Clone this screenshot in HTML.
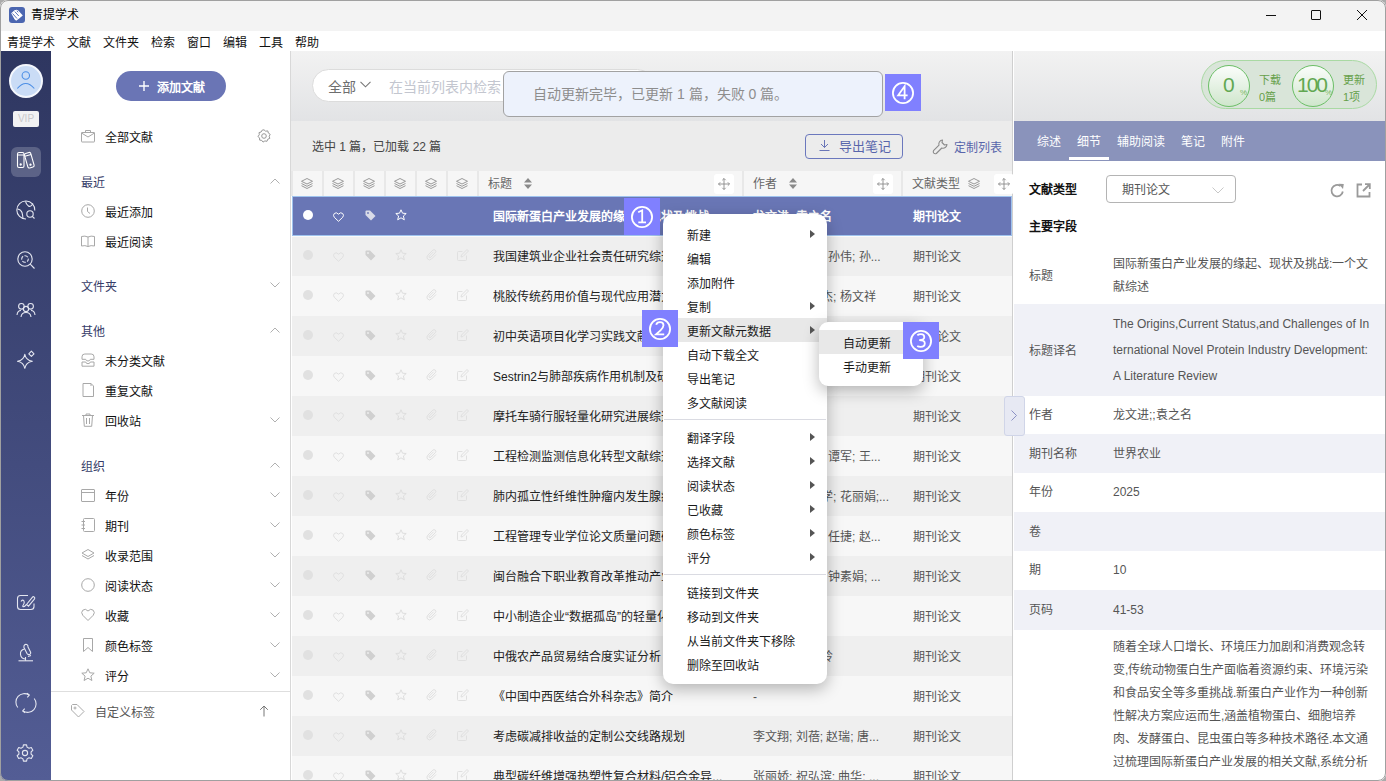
<!DOCTYPE html><html lang="zh-CN"><head><meta charset="utf-8"><style>
*{box-sizing:border-box;margin:0;padding:0}
html,body{width:1386px;height:781px;overflow:hidden;background:#ababab}
body{font-family:"Liberation Sans",sans-serif;font-size:12px;color:#222;position:relative}
.a{position:absolute}
.t{position:absolute;white-space:nowrap;line-height:16px;margin-top:1.5px}
svg{position:absolute;overflow:visible}
#win{position:absolute;left:0;top:0;width:1386px;height:781px;border-radius:8px;overflow:hidden;background:#fff}
#frame{position:absolute;left:0;top:0;width:1386px;height:781px;border-radius:8px;border:1px solid #a0a0a0;pointer-events:none}
</style></head><body><div id="win">
<div class="a" style="left:0;top:0;width:1386px;height:31px;background:#f3f3f3"></div>
<div class="a" style="left:9px;top:7px;width:16px;height:16px;border-radius:3px;background:#4b66b0"></div>
<svg style="left:9px;top:7px" width="16" height="16" viewBox="0 0 16 16"><path d="M2.2 6.3 L5.5 3.3 L7.8 2.8 L9.5 3.8 L13.8 8.6 L10.5 11.2 L7.2 13.8 L5.5 12.2 Z" fill="#fff"/><path d="M3.5 6.5 L8 11.5 M5.8 4.6 L9.8 9 M7.8 3.8 L9.2 5.3" stroke="#4b66b0" stroke-width="0.9"/></svg>
<div class="t" style="left:31px;top:5px;color:#000">青提学术</div>
<div class="a" style="left:1266px;top:15px;width:10px;height:1px;background:#111"></div>
<div class="a" style="left:1311px;top:10px;width:10px;height:10px;border:1px solid #111;border-radius:1px"></div>
<svg style="left:1357px;top:10px" width="10" height="10" viewBox="0 0 10 10"><path d="M0 0L10 10M10 0L0 10" stroke="#111" stroke-width="1"/></svg>
<div class="a" style="left:0;top:31px;width:1386px;height:20px;background:#fff"></div>
<div class="t" style="left:7px;top:33px;color:#111">青提学术</div>
<div class="t" style="left:67px;top:33px;color:#111">文献</div>
<div class="t" style="left:103px;top:33px;color:#111">文件夹</div>
<div class="t" style="left:151px;top:33px;color:#111">检索</div>
<div class="t" style="left:187px;top:33px;color:#111">窗口</div>
<div class="t" style="left:223px;top:33px;color:#111">编辑</div>
<div class="t" style="left:259px;top:33px;color:#111">工具</div>
<div class="t" style="left:295px;top:33px;color:#111">帮助</div>
<div class="a" style="left:0;top:51px;width:51px;height:730px;background:linear-gradient(#2e3660,#535d95)"></div>
<div class="a" style="left:9px;top:64px;width:34px;height:34px;border-radius:50%;background:#cadcf6;border:2px solid #f4f7fd"></div>
<svg style="left:9px;top:64px" width="34" height="34" viewBox="0 0 34 34"><circle cx="16.8" cy="11.5" r="3.7" fill="none" stroke="#4d8fe6" stroke-width="1.1"/><path d="M8.3 24.5 Q16.8 14.5 25.3 24.5" fill="none" stroke="#4d8fe6" stroke-width="1.1"/></svg>
<div class="a" style="left:13px;top:111px;width:26px;height:16px;border-radius:2px;background:#f1f1f3;color:#c9c9cc;font-size:10px;line-height:16px;text-align:center">VIP</div>
<div class="a" style="left:11px;top:147px;width:30px;height:30px;border-radius:6px;background:rgba(255,255,255,0.2)"></div>
<svg style="left:16px;top:151px" width="20" height="18" viewBox="0 0 20 18" fill="none" stroke="#fff" stroke-width="1.1"><rect x="1.5" y="1.5" width="6.5" height="15" rx="1.5"/><path d="M1.5 4h6.5"/><circle cx="4.7" cy="13.5" r="0.6" fill="#fff"/><g transform="rotate(-16 13 9)"><rect x="10" y="1.8" width="6.5" height="15" rx="1.5"/><path d="M10 4.3h6.5"/><circle cx="13.2" cy="13.8" r="0.6" fill="#fff"/></g></svg>
<svg style="left:16px;top:200px" width="20" height="20" viewBox="0 0 20 20" fill="none" stroke="#e4e6f0" stroke-width="1.1"><path d="M18.8 10.5 A9 9 0 1 0 10 19"/><path d="M9.5 1.3 Q10 4 12.5 6 Q14.5 7.5 17 3.5"/><path d="M1.5 9 Q5 9.5 6 12.5 Q6.8 15.5 7 18.7"/><circle cx="14" cy="14" r="3.2"/><path d="M16.3 16.3 L18.5 18.5"/></svg>
<svg style="left:16px;top:250px" width="20" height="20" viewBox="0 0 20 20" fill="none" stroke="#e4e6f0" stroke-width="1.1"><circle cx="9" cy="9" r="7.2"/><path d="M14.2 14.2 L18.5 18.5"/><circle cx="9" cy="9" r="3.3" stroke-dasharray="3.8 1.4" stroke-dashoffset="1"/></svg>
<svg style="left:16px;top:301px" width="20" height="18" viewBox="0 0 20 18" fill="none" stroke="#e4e6f0" stroke-width="1.1"><circle cx="5.4" cy="5.3" r="2.8"/><circle cx="14.6" cy="5.3" r="2.8"/><circle cx="10" cy="8" r="2.6"/><path d="M1 14 Q1.5 9.5 5 9.5 M19 14 Q18.5 9.5 15 9.5 M5 16 Q5.5 11.5 10 11.5 Q14.5 11.5 15 16"/></svg>
<svg style="left:15px;top:350px" width="20" height="20" viewBox="0 0 20 20" fill="none" stroke="#e4e6f0" stroke-width="1.1" stroke-linejoin="round"><path d="M9.8 4.3 Q10.8 10 17.3 11.3 Q10.8 12.6 9.8 18.3 Q8.8 12.6 2.5 11.3 Q8.8 10 9.8 4.3Z"/><path d="M16.4 1.2 L19 3.8 L16.4 6.4 L13.8 3.8 Z"/></svg>
<svg style="left:16px;top:594px" width="20" height="18" viewBox="0 0 20 18" fill="none" stroke="#e4e6f0" stroke-width="1.1"><path d="M12 1.5 H4.5 Q1.5 1.5 1.5 4.5 V12.5 Q1.5 15.5 4.5 15.5 H15 Q18 15.5 18 12.5 V9.5"/><path d="M10.5 10.5 L16.3 3.3 Q17.2 2.2 18.3 3.1 Q19.3 4.1 18.4 5.1 L12.5 12.2 Z"/><path d="M5 7.5 Q6.5 5 8 7 Q9 9 7 11.5 Q6 13 8.5 12.5 L10.5 10.5"/></svg>
<svg style="left:17px;top:643px" width="18" height="19" viewBox="0 0 18 19" fill="none" stroke="#e4e6f0" stroke-width="1.1" stroke-linejoin="round"><path d="M1.5 17.8 H16"/><path d="M7 2.8 Q7.8 0.8 9.8 1.5 Q11.3 2.3 11 4 L13.5 9 Q14.2 11 12.5 11.5 Q10.8 12 10 10.5 L7.5 5.5 Q6.5 4.5 7 2.8Z"/><path d="M7.5 6 Q3 7 3.5 11.5 Q4 15.5 8 16 M8.5 14 V17.8 M11 13.5 L14 12.5"/></svg>
<svg style="left:16px;top:693px" width="20" height="20" viewBox="0 0 20 20" fill="none" stroke="#e4e6f0" stroke-width="1.1"><path d="M1.8 14.5 A8.5 8.5 0 0 1 13 2"/><path d="M18.2 5.5 A8.5 8.5 0 0 1 7 18"/><path d="M11 0.3 L13.3 2.1 L11.3 4.3 M9 19.7 L6.7 17.9 L8.7 15.7"/></svg>
<svg style="left:16px;top:744px" width="18" height="18" viewBox="0 0 18 18" fill="none" stroke="#e4e6f0" stroke-width="1.1" stroke-linejoin="round"><path d="M7.44 0.85 L10.56 0.85 L11.04 3.14 L13.05 4.31 L15.28 3.58 L16.84 6.27 L15.09 7.84 L15.09 10.16 L16.84 11.73 L15.28 14.42 L13.05 13.69 L11.04 14.86 L10.56 17.15 L7.44 17.15 L6.96 14.86 L4.95 13.69 L2.72 14.42 L1.16 11.73 L2.91 10.16 L2.91 7.84 L1.16 6.27 L2.72 3.58 L4.95 4.31 L6.96 3.14Z"/><circle cx="9" cy="9" r="2.6"/></svg>
<div class="a" style="left:51px;top:51px;width:239px;height:730px;background:#fff"></div>
<div class="a" style="left:290px;top:51px;width:1px;height:730px;background:#d8d8d8"></div>
<div class="a" style="left:116px;top:71px;width:110px;height:30px;border-radius:15px;background:#6a75b5"></div>
<svg style="left:138px;top:80px" width="12" height="12" viewBox="0 0 12 12"><path d="M6 1V11M1 6H11" stroke="#fff" stroke-width="1.4"/></svg>
<div class="t" style="left:157px;top:78px;color:#fff;font-weight:bold">添加文献</div>
<svg style="left:81px;top:129px" width="14" height="14" viewBox="0 0 14 14" fill="none" stroke="#a8a8a8" stroke-width="1"><rect x="0.5" y="3.5" width="13" height="9.5" rx="0.5"/><path d="M4.5 3.5V1.5h5v2M0.5 4 L7 8 L13.5 4"/></svg>
<div class="t" style="left:105px;top:128px;color:#111">全部文献</div>
<svg style="left:257px;top:129px" width="14" height="14" viewBox="0 0 14 14" fill="none" stroke="#999" stroke-width="1"><path d="M7 0.8 L8.6 2.2 L10.8 1.9 L11.3 4 L13.2 5.3 L12.2 7.3 L12.8 9.4 L10.8 10.2 L10 12.3 L7.9 11.9 L6 13.1 L4.8 11.4 L2.6 11.1 L2.6 8.9 L0.9 7.5 L2.3 5.8 L2 3.6 L4.1 3 L5.2 1.1 Z" stroke-linejoin="round"/><circle cx="7" cy="7" r="2.3"/></svg>
<div class="t" style="left:81px;top:173px;color:#363c68">最近</div>
<svg style="left:270px;top:178px" width="10" height="6" viewBox="0 0 10 6"><path d="M0.5 5.5 L5 1 L9.5 5.5" fill="none" stroke="#b0b0b0" stroke-width="1"/></svg>
<svg style="left:81px;top:204px" width="14" height="14" viewBox="0 0 14 14" fill="none" stroke="#a8a8a8" stroke-width="1"><circle cx="7" cy="7" r="6.3"/><path d="M6.5 3.5V7.5L9 9.5"/></svg>
<div class="t" style="left:105px;top:203px;color:#111">最近添加</div>
<svg style="left:81px;top:234px" width="14" height="14" viewBox="0 0 14 14" fill="none" stroke="#a8a8a8" stroke-width="1"><path d="M0.5 2.5 Q4 1.5 7 3 Q10 1.5 13.5 2.5 V12 Q10 11 7 12.5 Q4 11 0.5 12 Z M7 3V12.5"/></svg>
<div class="t" style="left:105px;top:233px;color:#111">最近阅读</div>
<div class="t" style="left:81px;top:277px;color:#363c68">文件夹</div>
<svg style="left:270px;top:282px" width="10" height="6" viewBox="0 0 10 6"><path d="M0.5 0.5 L5 5 L9.5 0.5" fill="none" stroke="#b0b0b0" stroke-width="1"/></svg>
<div class="t" style="left:81px;top:322px;color:#363c68">其他</div>
<svg style="left:270px;top:327px" width="10" height="6" viewBox="0 0 10 6"><path d="M0.5 5.5 L5 1 L9.5 5.5" fill="none" stroke="#b0b0b0" stroke-width="1"/></svg>
<svg style="left:81px;top:353px" width="14" height="14" viewBox="0 0 14 14" fill="none" stroke="#a8a8a8" stroke-width="1"><path d="M1 6.3 V3.8 Q1 1 3.8 1 H10.2 Q13 1 13 3.8 V6.3 H9.3 Q9 8 7 8 Q5 8 4.7 6.3 Z"/><path d="M1 9 H4.7 Q5 10.7 7 10.7 Q9 10.7 9.3 9 H13 V13.2 H1 Z"/></svg>
<div class="t" style="left:105px;top:352px;color:#111">未分类文献</div>
<svg style="left:81px;top:383px" width="14" height="14" viewBox="0 0 14 14" fill="none" stroke="#a8a8a8" stroke-width="1"><path d="M2 0.5 H10 L12.5 3 V13.5 H2 Z M10 0.5V3"/></svg>
<div class="t" style="left:105px;top:382px;color:#111">重复文献</div>
<svg style="left:81px;top:413px" width="14" height="14" viewBox="0 0 14 14" fill="none" stroke="#a8a8a8" stroke-width="1"><path d="M1 2.5H13M5 2.5V1H9V2.5M2.5 2.5 L3.3 13.3 H10.7 L11.5 2.5M5.5 5V11M8.5 5V11"/></svg>
<div class="t" style="left:105px;top:412px;color:#111">回收站</div>
<svg style="left:270px;top:417px" width="10" height="6" viewBox="0 0 10 6"><path d="M0.5 0.5 L5 5 L9.5 0.5" fill="none" stroke="#b0b0b0" stroke-width="1"/></svg>
<div class="t" style="left:81px;top:457px;color:#363c68">组织</div>
<svg style="left:270px;top:462px" width="10" height="6" viewBox="0 0 10 6"><path d="M0.5 5.5 L5 1 L9.5 5.5" fill="none" stroke="#b0b0b0" stroke-width="1"/></svg>
<svg style="left:81px;top:488px" width="14" height="14" viewBox="0 0 14 14" fill="none" stroke="#a8a8a8" stroke-width="1"><rect x="0.5" y="1.5" width="13" height="12" rx="0.5"/><path d="M0.5 4.5H13.5"/></svg>
<div class="t" style="left:105px;top:487px;color:#111">年份</div>
<svg style="left:270px;top:492px" width="10" height="6" viewBox="0 0 10 6"><path d="M0.5 0.5 L5 5 L9.5 0.5" fill="none" stroke="#b0b0b0" stroke-width="1"/></svg>
<svg style="left:81px;top:518px" width="14" height="14" viewBox="0 0 14 14" fill="none" stroke="#a8a8a8" stroke-width="1"><rect x="2.5" y="0.5" width="11" height="13" rx="1"/><path d="M0.5 3.5H4M0.5 7H4M0.5 10.5H4"/></svg>
<div class="t" style="left:105px;top:517px;color:#111">期刊</div>
<svg style="left:270px;top:522px" width="10" height="6" viewBox="0 0 10 6"><path d="M0.5 0.5 L5 5 L9.5 0.5" fill="none" stroke="#b0b0b0" stroke-width="1"/></svg>
<svg style="left:81px;top:548px" width="14" height="14" viewBox="0 0 14 14" fill="none" stroke="#a8a8a8" stroke-width="1"><path d="M7 1.5 L13 5 L7 8.5 L1 5 Z M1 7.5 L7 11 L13 7.5"/></svg>
<div class="t" style="left:105px;top:547px;color:#111">收录范围</div>
<svg style="left:270px;top:552px" width="10" height="6" viewBox="0 0 10 6"><path d="M0.5 0.5 L5 5 L9.5 0.5" fill="none" stroke="#b0b0b0" stroke-width="1"/></svg>
<svg style="left:81px;top:578px" width="14" height="14" viewBox="0 0 14 14" fill="none" stroke="#a8a8a8" stroke-width="1"><circle cx="7" cy="7" r="6.3"/></svg>
<div class="t" style="left:105px;top:577px;color:#111">阅读状态</div>
<svg style="left:270px;top:582px" width="10" height="6" viewBox="0 0 10 6"><path d="M0.5 0.5 L5 5 L9.5 0.5" fill="none" stroke="#b0b0b0" stroke-width="1"/></svg>
<svg style="left:81px;top:608px" width="14" height="14" viewBox="0 0 14 14" fill="none" stroke="#a8a8a8" stroke-width="1"><path d="M7 12.5 L1.8 7.3 Q-0.5 4.5 1.8 2.2 Q4.3 0 7 3 Q9.7 0 12.2 2.2 Q14.5 4.5 12.2 7.3 Z"/></svg>
<div class="t" style="left:105px;top:607px;color:#111">收藏</div>
<svg style="left:270px;top:612px" width="10" height="6" viewBox="0 0 10 6"><path d="M0.5 0.5 L5 5 L9.5 0.5" fill="none" stroke="#b0b0b0" stroke-width="1"/></svg>
<svg style="left:81px;top:638px" width="14" height="14" viewBox="0 0 14 14" fill="none" stroke="#a8a8a8" stroke-width="1"><path d="M2.5 0.5 H11.5 V13.5 L7 9.5 L2.5 13.5 Z"/></svg>
<div class="t" style="left:105px;top:637px;color:#111">颜色标签</div>
<svg style="left:270px;top:642px" width="10" height="6" viewBox="0 0 10 6"><path d="M0.5 0.5 L5 5 L9.5 0.5" fill="none" stroke="#b0b0b0" stroke-width="1"/></svg>
<svg style="left:81px;top:668px" width="14" height="14" viewBox="0 0 14 14" fill="none" stroke="#a8a8a8" stroke-width="1"><path d="M7 0.8 L8.8 4.8 L13.2 5.2 L9.9 8.1 L10.9 12.5 L7 10.2 L3.1 12.5 L4.1 8.1 L0.8 5.2 L5.2 4.8 Z" stroke-linejoin="round"/></svg>
<div class="t" style="left:105px;top:667px;color:#111">评分</div>
<svg style="left:270px;top:672px" width="10" height="6" viewBox="0 0 10 6"><path d="M0.5 0.5 L5 5 L9.5 0.5" fill="none" stroke="#b0b0b0" stroke-width="1"/></svg>
<div class="a" style="left:51px;top:691px;width:239px;height:1px;background:#dedede"></div>
<svg style="left:71px;top:704px" width="14" height="14" viewBox="0 0 14 14" fill="none" stroke="#aaa" stroke-width="1"><path d="M0.5 1.5 V6 L7.5 13 L13 7.5 L6 0.5 H1.5 Z"/><circle cx="4" cy="4" r="1"/></svg>
<div class="t" style="left:95px;top:703px;color:#555">自定义标签</div>
<svg style="left:259px;top:705px" width="10" height="12" viewBox="0 0 10 12"><path d="M5 11.5V1M1.2 4.8 L5 1 L8.8 4.8" fill="none" stroke="#777" stroke-width="1"/></svg>
<div class="a" style="left:291px;top:51px;width:721px;height:70px;background:linear-gradient(#f2f2f2,#e2e3e5)"></div>
<div class="a" style="left:291px;top:121px;width:721px;height:50px;background:#ececec"></div>
<div class="a" style="left:1012px;top:51px;width:1px;height:730px;background:#cfcfcf"></div>
<div class="a" style="left:312px;top:69px;width:342px;height:33px;border-radius:17px;background:#fff;border:1px solid #dcdcdc"></div>
<div class="t" style="left:328px;top:77px;font-size:14px;color:#6e6e6e">全部</div>
<svg style="left:360px;top:81px" width="11" height="7" viewBox="0 0 11 7"><path d="M0.5 0.8 L5.5 5.8 L10.5 0.8" fill="none" stroke="#777" stroke-width="1.1"/></svg>
<div class="t" style="left:389px;top:77px;font-size:14px;color:#c3c6cf">在当前列表内检索</div>
<div class="a" style="left:503px;top:71px;width:380px;height:46px;border-radius:6px;background:#edf2fc;border:1.5px solid #a2a2a2"></div>
<div class="t" style="left:533px;top:84px;font-size:14px;color:#8d8d8d">自动更新完毕，已更新 1 篇，失败 0 篇。</div>
<div class="t" style="left:312px;top:137px;color:#444">选中 1 篇，已加载 22 篇</div>
<div class="a" style="left:805px;top:134px;width:98px;height:25px;border-radius:4px;border:1px solid #6b78bd"></div>
<svg style="left:819px;top:139px" width="11" height="13" viewBox="0 0 11 13"><path d="M5.5 1V8.5M2 5 L5.5 8.5 L9 5M0.5 11.5H10.5" fill="none" stroke="#6a76b8" stroke-width="1"/></svg>
<div class="t" style="left:839px;top:137px;font-size:13px;color:#5865ab">导出笔记</div>
<svg style="left:932px;top:139px" width="16" height="16" viewBox="0 0 16 16"><path d="M10.5 1 A4 4 0 0 0 7 6.2 L1.5 11.7 Q0.8 13 1.8 14.2 Q3 15.2 4.3 14.5 L9.8 9 A4 4 0 0 0 15 5.5 L12.5 6 L10 3.5 Z" fill="none" stroke="#8a8a8a" stroke-width="1.1" stroke-linejoin="round"/></svg>
<div class="t" style="left:954px;top:138px;color:#5865ab">定制列表</div>
<div class="a" style="left:291px;top:171px;width:721px;height:25px;background:#e8e8e8"></div>
<div class="a" style="left:293px;top:171px;width:29px;height:25px;background:#f6f6f6"></div>
<div class="a" style="left:324px;top:171px;width:29px;height:25px;background:#f6f6f6"></div>
<div class="a" style="left:355px;top:171px;width:29px;height:25px;background:#f6f6f6"></div>
<div class="a" style="left:386px;top:171px;width:29px;height:25px;background:#f6f6f6"></div>
<div class="a" style="left:417px;top:171px;width:29px;height:25px;background:#f6f6f6"></div>
<div class="a" style="left:448px;top:171px;width:29px;height:25px;background:#f6f6f6"></div>
<div class="a" style="left:479px;top:171px;width:263px;height:25px;background:#f6f6f6"></div>
<div class="a" style="left:744px;top:171px;width:157px;height:25px;background:#f6f6f6"></div>
<div class="a" style="left:903px;top:171px;width:109px;height:25px;background:#f6f6f6"></div>
<svg style="left:301px;top:178px" width="12" height="11" viewBox="0 0 12 11"><path d="M6 0.5 L11.5 3.3 L6 6 L0.5 3.3 Z M0.5 5.5 L6 8.3 L11.5 5.5 M0.5 7.7 L6 10.5 L11.5 7.7" fill="none" stroke="#8e8e8e" stroke-width="0.9" stroke-linejoin="round"/></svg>
<svg style="left:332px;top:178px" width="12" height="11" viewBox="0 0 12 11"><path d="M6 0.5 L11.5 3.3 L6 6 L0.5 3.3 Z M0.5 5.5 L6 8.3 L11.5 5.5 M0.5 7.7 L6 10.5 L11.5 7.7" fill="none" stroke="#8e8e8e" stroke-width="0.9" stroke-linejoin="round"/></svg>
<svg style="left:363px;top:178px" width="12" height="11" viewBox="0 0 12 11"><path d="M6 0.5 L11.5 3.3 L6 6 L0.5 3.3 Z M0.5 5.5 L6 8.3 L11.5 5.5 M0.5 7.7 L6 10.5 L11.5 7.7" fill="none" stroke="#8e8e8e" stroke-width="0.9" stroke-linejoin="round"/></svg>
<svg style="left:394px;top:178px" width="12" height="11" viewBox="0 0 12 11"><path d="M6 0.5 L11.5 3.3 L6 6 L0.5 3.3 Z M0.5 5.5 L6 8.3 L11.5 5.5 M0.5 7.7 L6 10.5 L11.5 7.7" fill="none" stroke="#8e8e8e" stroke-width="0.9" stroke-linejoin="round"/></svg>
<svg style="left:425px;top:178px" width="12" height="11" viewBox="0 0 12 11"><path d="M6 0.5 L11.5 3.3 L6 6 L0.5 3.3 Z M0.5 5.5 L6 8.3 L11.5 5.5 M0.5 7.7 L6 10.5 L11.5 7.7" fill="none" stroke="#8e8e8e" stroke-width="0.9" stroke-linejoin="round"/></svg>
<svg style="left:456px;top:178px" width="12" height="11" viewBox="0 0 12 11"><path d="M6 0.5 L11.5 3.3 L6 6 L0.5 3.3 Z M0.5 5.5 L6 8.3 L11.5 5.5 M0.5 7.7 L6 10.5 L11.5 7.7" fill="none" stroke="#8e8e8e" stroke-width="0.9" stroke-linejoin="round"/></svg>
<div class="t" style="left:488px;top:174px;color:#666">标题</div>
<svg style="left:524px;top:178px" width="8" height="11" viewBox="0 0 8 11"><path d="M4 0 L8 4.5 H0 Z M0 6.5 H8 L4 11 Z" fill="#8a8a8a"/></svg>
<div class="t" style="left:753px;top:174px;color:#666">作者</div>
<svg style="left:789px;top:178px" width="8" height="11" viewBox="0 0 8 11"><path d="M4 0 L8 4.5 H0 Z M0 6.5 H8 L4 11 Z" fill="#8a8a8a"/></svg>
<div class="t" style="left:912px;top:174px;color:#666">文献类型</div>
<svg style="left:968px;top:178px" width="12" height="11" viewBox="0 0 12 11"><path d="M6 0.5 L11.5 3.3 L6 6 L0.5 3.3 Z M0.5 5.5 L6 8.3 L11.5 5.5 M0.5 7.7 L6 10.5 L11.5 7.7" fill="none" stroke="#8e8e8e" stroke-width="0.9" stroke-linejoin="round"/></svg>
<div class="a" style="left:714px;top:174px;width:20px;height:20px;border-radius:3px;background:#fff"></div>
<svg style="left:718px;top:178px" width="12" height="12" viewBox="0 0 12 12"><path d="M6 0.5V11.5M0.5 6H11.5M4.3 2.2 L6 0.5 L7.7 2.2M4.3 9.8 L6 11.5 L7.7 9.8M2.2 4.3 L0.5 6 L2.2 7.7M9.8 4.3 L11.5 6 L9.8 7.7" fill="none" stroke="#8a8a8a" stroke-width="0.9"/></svg>
<div class="a" style="left:873px;top:174px;width:20px;height:20px;border-radius:3px;background:#fff"></div>
<svg style="left:877px;top:178px" width="12" height="12" viewBox="0 0 12 12"><path d="M6 0.5V11.5M0.5 6H11.5M4.3 2.2 L6 0.5 L7.7 2.2M4.3 9.8 L6 11.5 L7.7 9.8M2.2 4.3 L0.5 6 L2.2 7.7M9.8 4.3 L11.5 6 L9.8 7.7" fill="none" stroke="#8a8a8a" stroke-width="0.9"/></svg>
<div class="a" style="left:994px;top:174px;width:20px;height:20px;border-radius:3px;background:#fff"></div>
<svg style="left:998px;top:178px" width="12" height="12" viewBox="0 0 12 12"><path d="M6 0.5V11.5M0.5 6H11.5M4.3 2.2 L6 0.5 L7.7 2.2M4.3 9.8 L6 11.5 L7.7 9.8M2.2 4.3 L0.5 6 L2.2 7.7M9.8 4.3 L11.5 6 L9.8 7.7" fill="none" stroke="#8a8a8a" stroke-width="0.9"/></svg>
<div class="a" style="left:292px;top:196px;width:720px;height:40px;background:#6976b5;border:1px solid #9fc3ee"></div>
<div class="a" style="left:303px;top:210px;width:10px;height:10px;border-radius:50%;background:#ffffff"></div>
<svg style="left:333px;top:212px" width="11" height="10" viewBox="0 0 11 10"><path d="M5.5 9.3 L1.3 5.3 Q-0.3 3.3 1.3 1.5 Q3.3 -0.3 5.5 2.2 Q7.7 -0.3 9.7 1.5 Q11.3 3.3 9.7 5.3 Z" fill="none" stroke="#ffffff" stroke-width="1"/></svg>
<svg style="left:365px;top:210px" width="11" height="11" viewBox="0 0 11 11"><path d="M0.5 1.5 Q0.5 0.5 1.5 0.5 H5 L10.5 6 L6 10.5 L0.5 5 Z" fill="#d9dbe8"/><circle cx="3" cy="3" r="0.9" fill="#6976b5"/></svg>
<svg style="left:395px;top:209px" width="12" height="12" viewBox="0 0 12 12"><path d="M6 0.8 L7.5 4.2 L11.2 4.5 L8.4 7 L9.3 10.8 L6 8.8 L2.7 10.8 L3.6 7 L0.8 4.5 L4.5 4.2 Z" fill="none" stroke="#ffffff" stroke-width="1" stroke-linejoin="round"/></svg>
<div class="t" style="left:493px;top:207px;width:240px;overflow:hidden;text-overflow:ellipsis;color:#fff;font-weight:bold">国际新蛋白产业发展的缘起、现状及挑战:一个文献综述</div>
<div class="t" style="left:753px;top:207px;color:#fff;font-weight:bold">龙文进; 袁之名</div>
<div class="t" style="left:913px;top:207px;color:#fff;font-weight:bold">期刊论文</div>
<div class="a" style="left:292px;top:236px;width:720px;height:40px;background:#efefef"></div>
<div class="a" style="left:292px;top:236px;width:720px;height:1px;background:#fafafa"></div>
<div class="a" style="left:303px;top:250px;width:10px;height:10px;border-radius:50%;background:#e1e1e1"></div>
<svg style="left:333px;top:252px" width="11" height="10" viewBox="0 0 11 10"><path d="M5.5 9.3 L1.3 5.3 Q-0.3 3.3 1.3 1.5 Q3.3 -0.3 5.5 2.2 Q7.7 -0.3 9.7 1.5 Q11.3 3.3 9.7 5.3 Z" fill="none" stroke="#e0e0e0" stroke-width="1"/></svg>
<svg style="left:365px;top:250px" width="11" height="11" viewBox="0 0 11 11"><path d="M0.5 1.5 Q0.5 0.5 1.5 0.5 H5 L10.5 6 L6 10.5 L0.5 5 Z" fill="#d0d0d0"/><circle cx="3" cy="3" r="0.9" fill="#efefef"/></svg>
<svg style="left:395px;top:249px" width="12" height="12" viewBox="0 0 12 12"><path d="M6 0.8 L7.5 4.2 L11.2 4.5 L8.4 7 L9.3 10.8 L6 8.8 L2.7 10.8 L3.6 7 L0.8 4.5 L4.5 4.2 Z" fill="none" stroke="#dedede" stroke-width="1" stroke-linejoin="round"/></svg>
<svg style="left:426px;top:249px" width="12" height="12" viewBox="0 0 12 12"><path d="M10 5.5 L5.5 10 Q3.5 12 1.5 10 Q0 8 2 6 L6.8 1.2 Q8 0 9.3 1.2 Q10.5 2.5 9.3 3.7 L4.8 8.2 Q4 9 3.3 8.3 Q2.7 7.5 3.5 6.8 L7.5 2.8" fill="none" stroke="#e0e0e0" stroke-width="1"/></svg>
<svg style="left:457px;top:249px" width="12" height="12" viewBox="0 0 12 12"><path d="M9.5 6.5 V10.5 Q9.5 11.5 8.5 11.5 H1.5 Q0.5 11.5 0.5 10.5 V3.5 Q0.5 2.5 1.5 2.5 H5.5 M4 8 L4.5 6 L10 0.5 L11.5 2 L6 7.5 Z" fill="none" stroke="#e0e0e0" stroke-width="1"/></svg>
<div class="t" style="left:493px;top:247px;width:240px;overflow:hidden;text-overflow:ellipsis;color:#222;font-weight:normal">我国建筑业企业社会责任研究综述</div>
<div class="t" style="left:828px;top:247px;color:#555;font-weight:normal">孙伟; 孙...</div>
<div class="t" style="left:913px;top:247px;color:#555;font-weight:normal">期刊论文</div>
<div class="a" style="left:292px;top:276px;width:720px;height:40px;background:#f7f7f7"></div>
<div class="a" style="left:303px;top:290px;width:10px;height:10px;border-radius:50%;background:#e1e1e1"></div>
<svg style="left:333px;top:292px" width="11" height="10" viewBox="0 0 11 10"><path d="M5.5 9.3 L1.3 5.3 Q-0.3 3.3 1.3 1.5 Q3.3 -0.3 5.5 2.2 Q7.7 -0.3 9.7 1.5 Q11.3 3.3 9.7 5.3 Z" fill="none" stroke="#e0e0e0" stroke-width="1"/></svg>
<svg style="left:365px;top:290px" width="11" height="11" viewBox="0 0 11 11"><path d="M0.5 1.5 Q0.5 0.5 1.5 0.5 H5 L10.5 6 L6 10.5 L0.5 5 Z" fill="#d0d0d0"/><circle cx="3" cy="3" r="0.9" fill="#efefef"/></svg>
<svg style="left:395px;top:289px" width="12" height="12" viewBox="0 0 12 12"><path d="M6 0.8 L7.5 4.2 L11.2 4.5 L8.4 7 L9.3 10.8 L6 8.8 L2.7 10.8 L3.6 7 L0.8 4.5 L4.5 4.2 Z" fill="none" stroke="#dedede" stroke-width="1" stroke-linejoin="round"/></svg>
<svg style="left:426px;top:289px" width="12" height="12" viewBox="0 0 12 12"><path d="M10 5.5 L5.5 10 Q3.5 12 1.5 10 Q0 8 2 6 L6.8 1.2 Q8 0 9.3 1.2 Q10.5 2.5 9.3 3.7 L4.8 8.2 Q4 9 3.3 8.3 Q2.7 7.5 3.5 6.8 L7.5 2.8" fill="none" stroke="#e0e0e0" stroke-width="1"/></svg>
<svg style="left:457px;top:289px" width="12" height="12" viewBox="0 0 12 12"><path d="M9.5 6.5 V10.5 Q9.5 11.5 8.5 11.5 H1.5 Q0.5 11.5 0.5 10.5 V3.5 Q0.5 2.5 1.5 2.5 H5.5 M4 8 L4.5 6 L10 0.5 L11.5 2 L6 7.5 Z" fill="none" stroke="#e0e0e0" stroke-width="1"/></svg>
<div class="t" style="left:493px;top:287px;width:240px;overflow:hidden;text-overflow:ellipsis;color:#222;font-weight:normal">桃胶传统药用价值与现代应用潜力研究</div>
<div class="t" style="left:821px;top:287px;color:#555;font-weight:normal">杰; 杨文祥</div>
<div class="t" style="left:913px;top:287px;color:#555;font-weight:normal">期刊论文</div>
<div class="a" style="left:292px;top:316px;width:720px;height:40px;background:#efefef"></div>
<div class="a" style="left:303px;top:330px;width:10px;height:10px;border-radius:50%;background:#e1e1e1"></div>
<svg style="left:333px;top:332px" width="11" height="10" viewBox="0 0 11 10"><path d="M5.5 9.3 L1.3 5.3 Q-0.3 3.3 1.3 1.5 Q3.3 -0.3 5.5 2.2 Q7.7 -0.3 9.7 1.5 Q11.3 3.3 9.7 5.3 Z" fill="none" stroke="#e0e0e0" stroke-width="1"/></svg>
<svg style="left:365px;top:330px" width="11" height="11" viewBox="0 0 11 11"><path d="M0.5 1.5 Q0.5 0.5 1.5 0.5 H5 L10.5 6 L6 10.5 L0.5 5 Z" fill="#d0d0d0"/><circle cx="3" cy="3" r="0.9" fill="#efefef"/></svg>
<svg style="left:395px;top:329px" width="12" height="12" viewBox="0 0 12 12"><path d="M6 0.8 L7.5 4.2 L11.2 4.5 L8.4 7 L9.3 10.8 L6 8.8 L2.7 10.8 L3.6 7 L0.8 4.5 L4.5 4.2 Z" fill="none" stroke="#dedede" stroke-width="1" stroke-linejoin="round"/></svg>
<svg style="left:426px;top:329px" width="12" height="12" viewBox="0 0 12 12"><path d="M10 5.5 L5.5 10 Q3.5 12 1.5 10 Q0 8 2 6 L6.8 1.2 Q8 0 9.3 1.2 Q10.5 2.5 9.3 3.7 L4.8 8.2 Q4 9 3.3 8.3 Q2.7 7.5 3.5 6.8 L7.5 2.8" fill="none" stroke="#e0e0e0" stroke-width="1"/></svg>
<svg style="left:457px;top:329px" width="12" height="12" viewBox="0 0 12 12"><path d="M9.5 6.5 V10.5 Q9.5 11.5 8.5 11.5 H1.5 Q0.5 11.5 0.5 10.5 V3.5 Q0.5 2.5 1.5 2.5 H5.5 M4 8 L4.5 6 L10 0.5 L11.5 2 L6 7.5 Z" fill="none" stroke="#e0e0e0" stroke-width="1"/></svg>
<div class="t" style="left:493px;top:327px;width:240px;overflow:hidden;text-overflow:ellipsis;color:#222;font-weight:normal">初中英语项目化学习实践文献综述</div>
<div class="t" style="left:913px;top:327px;color:#555;font-weight:normal">期刊论文</div>
<div class="a" style="left:292px;top:356px;width:720px;height:40px;background:#f7f7f7"></div>
<div class="a" style="left:303px;top:370px;width:10px;height:10px;border-radius:50%;background:#e1e1e1"></div>
<svg style="left:333px;top:372px" width="11" height="10" viewBox="0 0 11 10"><path d="M5.5 9.3 L1.3 5.3 Q-0.3 3.3 1.3 1.5 Q3.3 -0.3 5.5 2.2 Q7.7 -0.3 9.7 1.5 Q11.3 3.3 9.7 5.3 Z" fill="none" stroke="#e0e0e0" stroke-width="1"/></svg>
<svg style="left:365px;top:370px" width="11" height="11" viewBox="0 0 11 11"><path d="M0.5 1.5 Q0.5 0.5 1.5 0.5 H5 L10.5 6 L6 10.5 L0.5 5 Z" fill="#d0d0d0"/><circle cx="3" cy="3" r="0.9" fill="#efefef"/></svg>
<svg style="left:395px;top:369px" width="12" height="12" viewBox="0 0 12 12"><path d="M6 0.8 L7.5 4.2 L11.2 4.5 L8.4 7 L9.3 10.8 L6 8.8 L2.7 10.8 L3.6 7 L0.8 4.5 L4.5 4.2 Z" fill="none" stroke="#dedede" stroke-width="1" stroke-linejoin="round"/></svg>
<svg style="left:426px;top:369px" width="12" height="12" viewBox="0 0 12 12"><path d="M10 5.5 L5.5 10 Q3.5 12 1.5 10 Q0 8 2 6 L6.8 1.2 Q8 0 9.3 1.2 Q10.5 2.5 9.3 3.7 L4.8 8.2 Q4 9 3.3 8.3 Q2.7 7.5 3.5 6.8 L7.5 2.8" fill="none" stroke="#e0e0e0" stroke-width="1"/></svg>
<svg style="left:457px;top:369px" width="12" height="12" viewBox="0 0 12 12"><path d="M9.5 6.5 V10.5 Q9.5 11.5 8.5 11.5 H1.5 Q0.5 11.5 0.5 10.5 V3.5 Q0.5 2.5 1.5 2.5 H5.5 M4 8 L4.5 6 L10 0.5 L11.5 2 L6 7.5 Z" fill="none" stroke="#e0e0e0" stroke-width="1"/></svg>
<div class="t" style="left:493px;top:367px;width:240px;overflow:hidden;text-overflow:ellipsis;color:#222;font-weight:normal">Sestrin2与肺部疾病作用机制及研究进展</div>
<div class="t" style="left:913px;top:367px;color:#555;font-weight:normal">期刊论文</div>
<div class="a" style="left:292px;top:396px;width:720px;height:40px;background:#efefef"></div>
<div class="a" style="left:303px;top:410px;width:10px;height:10px;border-radius:50%;background:#e1e1e1"></div>
<svg style="left:333px;top:412px" width="11" height="10" viewBox="0 0 11 10"><path d="M5.5 9.3 L1.3 5.3 Q-0.3 3.3 1.3 1.5 Q3.3 -0.3 5.5 2.2 Q7.7 -0.3 9.7 1.5 Q11.3 3.3 9.7 5.3 Z" fill="none" stroke="#e0e0e0" stroke-width="1"/></svg>
<svg style="left:365px;top:410px" width="11" height="11" viewBox="0 0 11 11"><path d="M0.5 1.5 Q0.5 0.5 1.5 0.5 H5 L10.5 6 L6 10.5 L0.5 5 Z" fill="#d0d0d0"/><circle cx="3" cy="3" r="0.9" fill="#efefef"/></svg>
<svg style="left:395px;top:409px" width="12" height="12" viewBox="0 0 12 12"><path d="M6 0.8 L7.5 4.2 L11.2 4.5 L8.4 7 L9.3 10.8 L6 8.8 L2.7 10.8 L3.6 7 L0.8 4.5 L4.5 4.2 Z" fill="none" stroke="#dedede" stroke-width="1" stroke-linejoin="round"/></svg>
<svg style="left:426px;top:409px" width="12" height="12" viewBox="0 0 12 12"><path d="M10 5.5 L5.5 10 Q3.5 12 1.5 10 Q0 8 2 6 L6.8 1.2 Q8 0 9.3 1.2 Q10.5 2.5 9.3 3.7 L4.8 8.2 Q4 9 3.3 8.3 Q2.7 7.5 3.5 6.8 L7.5 2.8" fill="none" stroke="#e0e0e0" stroke-width="1"/></svg>
<svg style="left:457px;top:409px" width="12" height="12" viewBox="0 0 12 12"><path d="M9.5 6.5 V10.5 Q9.5 11.5 8.5 11.5 H1.5 Q0.5 11.5 0.5 10.5 V3.5 Q0.5 2.5 1.5 2.5 H5.5 M4 8 L4.5 6 L10 0.5 L11.5 2 L6 7.5 Z" fill="none" stroke="#e0e0e0" stroke-width="1"/></svg>
<div class="t" style="left:493px;top:407px;width:240px;overflow:hidden;text-overflow:ellipsis;color:#222;font-weight:normal">摩托车骑行服轻量化研究进展综述</div>
<div class="t" style="left:913px;top:407px;color:#555;font-weight:normal">期刊论文</div>
<div class="a" style="left:292px;top:436px;width:720px;height:40px;background:#f7f7f7"></div>
<div class="a" style="left:303px;top:450px;width:10px;height:10px;border-radius:50%;background:#e1e1e1"></div>
<svg style="left:333px;top:452px" width="11" height="10" viewBox="0 0 11 10"><path d="M5.5 9.3 L1.3 5.3 Q-0.3 3.3 1.3 1.5 Q3.3 -0.3 5.5 2.2 Q7.7 -0.3 9.7 1.5 Q11.3 3.3 9.7 5.3 Z" fill="none" stroke="#e0e0e0" stroke-width="1"/></svg>
<svg style="left:365px;top:450px" width="11" height="11" viewBox="0 0 11 11"><path d="M0.5 1.5 Q0.5 0.5 1.5 0.5 H5 L10.5 6 L6 10.5 L0.5 5 Z" fill="#d0d0d0"/><circle cx="3" cy="3" r="0.9" fill="#efefef"/></svg>
<svg style="left:395px;top:449px" width="12" height="12" viewBox="0 0 12 12"><path d="M6 0.8 L7.5 4.2 L11.2 4.5 L8.4 7 L9.3 10.8 L6 8.8 L2.7 10.8 L3.6 7 L0.8 4.5 L4.5 4.2 Z" fill="none" stroke="#dedede" stroke-width="1" stroke-linejoin="round"/></svg>
<svg style="left:426px;top:449px" width="12" height="12" viewBox="0 0 12 12"><path d="M10 5.5 L5.5 10 Q3.5 12 1.5 10 Q0 8 2 6 L6.8 1.2 Q8 0 9.3 1.2 Q10.5 2.5 9.3 3.7 L4.8 8.2 Q4 9 3.3 8.3 Q2.7 7.5 3.5 6.8 L7.5 2.8" fill="none" stroke="#e0e0e0" stroke-width="1"/></svg>
<svg style="left:457px;top:449px" width="12" height="12" viewBox="0 0 12 12"><path d="M9.5 6.5 V10.5 Q9.5 11.5 8.5 11.5 H1.5 Q0.5 11.5 0.5 10.5 V3.5 Q0.5 2.5 1.5 2.5 H5.5 M4 8 L4.5 6 L10 0.5 L11.5 2 L6 7.5 Z" fill="none" stroke="#e0e0e0" stroke-width="1"/></svg>
<div class="t" style="left:493px;top:447px;width:240px;overflow:hidden;text-overflow:ellipsis;color:#222;font-weight:normal">工程检测监测信息化转型文献综述</div>
<div class="t" style="left:828px;top:447px;color:#555;font-weight:normal">谭军; 王...</div>
<div class="t" style="left:913px;top:447px;color:#555;font-weight:normal">期刊论文</div>
<div class="a" style="left:292px;top:476px;width:720px;height:40px;background:#efefef"></div>
<div class="a" style="left:303px;top:490px;width:10px;height:10px;border-radius:50%;background:#e1e1e1"></div>
<svg style="left:333px;top:492px" width="11" height="10" viewBox="0 0 11 10"><path d="M5.5 9.3 L1.3 5.3 Q-0.3 3.3 1.3 1.5 Q3.3 -0.3 5.5 2.2 Q7.7 -0.3 9.7 1.5 Q11.3 3.3 9.7 5.3 Z" fill="none" stroke="#e0e0e0" stroke-width="1"/></svg>
<svg style="left:365px;top:490px" width="11" height="11" viewBox="0 0 11 11"><path d="M0.5 1.5 Q0.5 0.5 1.5 0.5 H5 L10.5 6 L6 10.5 L0.5 5 Z" fill="#d0d0d0"/><circle cx="3" cy="3" r="0.9" fill="#efefef"/></svg>
<svg style="left:395px;top:489px" width="12" height="12" viewBox="0 0 12 12"><path d="M6 0.8 L7.5 4.2 L11.2 4.5 L8.4 7 L9.3 10.8 L6 8.8 L2.7 10.8 L3.6 7 L0.8 4.5 L4.5 4.2 Z" fill="none" stroke="#dedede" stroke-width="1" stroke-linejoin="round"/></svg>
<svg style="left:426px;top:489px" width="12" height="12" viewBox="0 0 12 12"><path d="M10 5.5 L5.5 10 Q3.5 12 1.5 10 Q0 8 2 6 L6.8 1.2 Q8 0 9.3 1.2 Q10.5 2.5 9.3 3.7 L4.8 8.2 Q4 9 3.3 8.3 Q2.7 7.5 3.5 6.8 L7.5 2.8" fill="none" stroke="#e0e0e0" stroke-width="1"/></svg>
<svg style="left:457px;top:489px" width="12" height="12" viewBox="0 0 12 12"><path d="M9.5 6.5 V10.5 Q9.5 11.5 8.5 11.5 H1.5 Q0.5 11.5 0.5 10.5 V3.5 Q0.5 2.5 1.5 2.5 H5.5 M4 8 L4.5 6 L10 0.5 L11.5 2 L6 7.5 Z" fill="none" stroke="#e0e0e0" stroke-width="1"/></svg>
<div class="t" style="left:493px;top:487px;width:240px;overflow:hidden;text-overflow:ellipsis;color:#222;font-weight:normal">肺内孤立性纤维性肿瘤内发生腺癌</div>
<div class="t" style="left:821px;top:487px;color:#555;font-weight:normal">学; 花丽娟;...</div>
<div class="t" style="left:913px;top:487px;color:#555;font-weight:normal">期刊论文</div>
<div class="a" style="left:292px;top:516px;width:720px;height:40px;background:#f7f7f7"></div>
<div class="a" style="left:303px;top:530px;width:10px;height:10px;border-radius:50%;background:#e1e1e1"></div>
<svg style="left:333px;top:532px" width="11" height="10" viewBox="0 0 11 10"><path d="M5.5 9.3 L1.3 5.3 Q-0.3 3.3 1.3 1.5 Q3.3 -0.3 5.5 2.2 Q7.7 -0.3 9.7 1.5 Q11.3 3.3 9.7 5.3 Z" fill="none" stroke="#e0e0e0" stroke-width="1"/></svg>
<svg style="left:365px;top:530px" width="11" height="11" viewBox="0 0 11 11"><path d="M0.5 1.5 Q0.5 0.5 1.5 0.5 H5 L10.5 6 L6 10.5 L0.5 5 Z" fill="#d0d0d0"/><circle cx="3" cy="3" r="0.9" fill="#efefef"/></svg>
<svg style="left:395px;top:529px" width="12" height="12" viewBox="0 0 12 12"><path d="M6 0.8 L7.5 4.2 L11.2 4.5 L8.4 7 L9.3 10.8 L6 8.8 L2.7 10.8 L3.6 7 L0.8 4.5 L4.5 4.2 Z" fill="none" stroke="#dedede" stroke-width="1" stroke-linejoin="round"/></svg>
<svg style="left:426px;top:529px" width="12" height="12" viewBox="0 0 12 12"><path d="M10 5.5 L5.5 10 Q3.5 12 1.5 10 Q0 8 2 6 L6.8 1.2 Q8 0 9.3 1.2 Q10.5 2.5 9.3 3.7 L4.8 8.2 Q4 9 3.3 8.3 Q2.7 7.5 3.5 6.8 L7.5 2.8" fill="none" stroke="#e0e0e0" stroke-width="1"/></svg>
<svg style="left:457px;top:529px" width="12" height="12" viewBox="0 0 12 12"><path d="M9.5 6.5 V10.5 Q9.5 11.5 8.5 11.5 H1.5 Q0.5 11.5 0.5 10.5 V3.5 Q0.5 2.5 1.5 2.5 H5.5 M4 8 L4.5 6 L10 0.5 L11.5 2 L6 7.5 Z" fill="none" stroke="#e0e0e0" stroke-width="1"/></svg>
<div class="t" style="left:493px;top:527px;width:240px;overflow:hidden;text-overflow:ellipsis;color:#222;font-weight:normal">工程管理专业学位论文质量问题研究</div>
<div class="t" style="left:828px;top:527px;color:#555;font-weight:normal">任捷; 赵...</div>
<div class="t" style="left:913px;top:527px;color:#555;font-weight:normal">期刊论文</div>
<div class="a" style="left:292px;top:556px;width:720px;height:40px;background:#efefef"></div>
<div class="a" style="left:303px;top:570px;width:10px;height:10px;border-radius:50%;background:#e1e1e1"></div>
<svg style="left:333px;top:572px" width="11" height="10" viewBox="0 0 11 10"><path d="M5.5 9.3 L1.3 5.3 Q-0.3 3.3 1.3 1.5 Q3.3 -0.3 5.5 2.2 Q7.7 -0.3 9.7 1.5 Q11.3 3.3 9.7 5.3 Z" fill="none" stroke="#e0e0e0" stroke-width="1"/></svg>
<svg style="left:365px;top:570px" width="11" height="11" viewBox="0 0 11 11"><path d="M0.5 1.5 Q0.5 0.5 1.5 0.5 H5 L10.5 6 L6 10.5 L0.5 5 Z" fill="#d0d0d0"/><circle cx="3" cy="3" r="0.9" fill="#efefef"/></svg>
<svg style="left:395px;top:569px" width="12" height="12" viewBox="0 0 12 12"><path d="M6 0.8 L7.5 4.2 L11.2 4.5 L8.4 7 L9.3 10.8 L6 8.8 L2.7 10.8 L3.6 7 L0.8 4.5 L4.5 4.2 Z" fill="none" stroke="#dedede" stroke-width="1" stroke-linejoin="round"/></svg>
<svg style="left:426px;top:569px" width="12" height="12" viewBox="0 0 12 12"><path d="M10 5.5 L5.5 10 Q3.5 12 1.5 10 Q0 8 2 6 L6.8 1.2 Q8 0 9.3 1.2 Q10.5 2.5 9.3 3.7 L4.8 8.2 Q4 9 3.3 8.3 Q2.7 7.5 3.5 6.8 L7.5 2.8" fill="none" stroke="#e0e0e0" stroke-width="1"/></svg>
<svg style="left:457px;top:569px" width="12" height="12" viewBox="0 0 12 12"><path d="M9.5 6.5 V10.5 Q9.5 11.5 8.5 11.5 H1.5 Q0.5 11.5 0.5 10.5 V3.5 Q0.5 2.5 1.5 2.5 H5.5 M4 8 L4.5 6 L10 0.5 L11.5 2 L6 7.5 Z" fill="none" stroke="#e0e0e0" stroke-width="1"/></svg>
<div class="t" style="left:493px;top:567px;width:240px;overflow:hidden;text-overflow:ellipsis;color:#222;font-weight:normal">闽台融合下职业教育改革推动产业发展</div>
<div class="t" style="left:828px;top:567px;color:#555;font-weight:normal">钟素娟; ...</div>
<div class="t" style="left:913px;top:567px;color:#555;font-weight:normal">期刊论文</div>
<div class="a" style="left:292px;top:596px;width:720px;height:40px;background:#f7f7f7"></div>
<div class="a" style="left:303px;top:610px;width:10px;height:10px;border-radius:50%;background:#e1e1e1"></div>
<svg style="left:333px;top:612px" width="11" height="10" viewBox="0 0 11 10"><path d="M5.5 9.3 L1.3 5.3 Q-0.3 3.3 1.3 1.5 Q3.3 -0.3 5.5 2.2 Q7.7 -0.3 9.7 1.5 Q11.3 3.3 9.7 5.3 Z" fill="none" stroke="#e0e0e0" stroke-width="1"/></svg>
<svg style="left:365px;top:610px" width="11" height="11" viewBox="0 0 11 11"><path d="M0.5 1.5 Q0.5 0.5 1.5 0.5 H5 L10.5 6 L6 10.5 L0.5 5 Z" fill="#d0d0d0"/><circle cx="3" cy="3" r="0.9" fill="#efefef"/></svg>
<svg style="left:395px;top:609px" width="12" height="12" viewBox="0 0 12 12"><path d="M6 0.8 L7.5 4.2 L11.2 4.5 L8.4 7 L9.3 10.8 L6 8.8 L2.7 10.8 L3.6 7 L0.8 4.5 L4.5 4.2 Z" fill="none" stroke="#dedede" stroke-width="1" stroke-linejoin="round"/></svg>
<svg style="left:426px;top:609px" width="12" height="12" viewBox="0 0 12 12"><path d="M10 5.5 L5.5 10 Q3.5 12 1.5 10 Q0 8 2 6 L6.8 1.2 Q8 0 9.3 1.2 Q10.5 2.5 9.3 3.7 L4.8 8.2 Q4 9 3.3 8.3 Q2.7 7.5 3.5 6.8 L7.5 2.8" fill="none" stroke="#e0e0e0" stroke-width="1"/></svg>
<svg style="left:457px;top:609px" width="12" height="12" viewBox="0 0 12 12"><path d="M9.5 6.5 V10.5 Q9.5 11.5 8.5 11.5 H1.5 Q0.5 11.5 0.5 10.5 V3.5 Q0.5 2.5 1.5 2.5 H5.5 M4 8 L4.5 6 L10 0.5 L11.5 2 L6 7.5 Z" fill="none" stroke="#e0e0e0" stroke-width="1"/></svg>
<div class="t" style="left:493px;top:607px;width:240px;overflow:hidden;text-overflow:ellipsis;color:#222;font-weight:normal">中小制造企业“数据孤岛”的轻量化解决方案</div>
<div class="t" style="left:913px;top:607px;color:#555;font-weight:normal">期刊论文</div>
<div class="a" style="left:292px;top:636px;width:720px;height:40px;background:#efefef"></div>
<div class="a" style="left:303px;top:650px;width:10px;height:10px;border-radius:50%;background:#e1e1e1"></div>
<svg style="left:333px;top:652px" width="11" height="10" viewBox="0 0 11 10"><path d="M5.5 9.3 L1.3 5.3 Q-0.3 3.3 1.3 1.5 Q3.3 -0.3 5.5 2.2 Q7.7 -0.3 9.7 1.5 Q11.3 3.3 9.7 5.3 Z" fill="none" stroke="#e0e0e0" stroke-width="1"/></svg>
<svg style="left:365px;top:650px" width="11" height="11" viewBox="0 0 11 11"><path d="M0.5 1.5 Q0.5 0.5 1.5 0.5 H5 L10.5 6 L6 10.5 L0.5 5 Z" fill="#d0d0d0"/><circle cx="3" cy="3" r="0.9" fill="#efefef"/></svg>
<svg style="left:395px;top:649px" width="12" height="12" viewBox="0 0 12 12"><path d="M6 0.8 L7.5 4.2 L11.2 4.5 L8.4 7 L9.3 10.8 L6 8.8 L2.7 10.8 L3.6 7 L0.8 4.5 L4.5 4.2 Z" fill="none" stroke="#dedede" stroke-width="1" stroke-linejoin="round"/></svg>
<svg style="left:426px;top:649px" width="12" height="12" viewBox="0 0 12 12"><path d="M10 5.5 L5.5 10 Q3.5 12 1.5 10 Q0 8 2 6 L6.8 1.2 Q8 0 9.3 1.2 Q10.5 2.5 9.3 3.7 L4.8 8.2 Q4 9 3.3 8.3 Q2.7 7.5 3.5 6.8 L7.5 2.8" fill="none" stroke="#e0e0e0" stroke-width="1"/></svg>
<svg style="left:457px;top:649px" width="12" height="12" viewBox="0 0 12 12"><path d="M9.5 6.5 V10.5 Q9.5 11.5 8.5 11.5 H1.5 Q0.5 11.5 0.5 10.5 V3.5 Q0.5 2.5 1.5 2.5 H5.5 M4 8 L4.5 6 L10 0.5 L11.5 2 L6 7.5 Z" fill="none" stroke="#e0e0e0" stroke-width="1"/></svg>
<div class="t" style="left:493px;top:647px;width:240px;overflow:hidden;text-overflow:ellipsis;color:#222;font-weight:normal">中俄农产品贸易结合度实证分析</div>
<div class="t" style="left:821px;top:647px;color:#555;font-weight:normal">玲</div>
<div class="t" style="left:913px;top:647px;color:#555;font-weight:normal">期刊论文</div>
<div class="a" style="left:292px;top:676px;width:720px;height:40px;background:#f7f7f7"></div>
<div class="a" style="left:303px;top:690px;width:10px;height:10px;border-radius:50%;background:#e1e1e1"></div>
<svg style="left:333px;top:692px" width="11" height="10" viewBox="0 0 11 10"><path d="M5.5 9.3 L1.3 5.3 Q-0.3 3.3 1.3 1.5 Q3.3 -0.3 5.5 2.2 Q7.7 -0.3 9.7 1.5 Q11.3 3.3 9.7 5.3 Z" fill="none" stroke="#e0e0e0" stroke-width="1"/></svg>
<svg style="left:365px;top:690px" width="11" height="11" viewBox="0 0 11 11"><path d="M0.5 1.5 Q0.5 0.5 1.5 0.5 H5 L10.5 6 L6 10.5 L0.5 5 Z" fill="#d0d0d0"/><circle cx="3" cy="3" r="0.9" fill="#efefef"/></svg>
<svg style="left:395px;top:689px" width="12" height="12" viewBox="0 0 12 12"><path d="M6 0.8 L7.5 4.2 L11.2 4.5 L8.4 7 L9.3 10.8 L6 8.8 L2.7 10.8 L3.6 7 L0.8 4.5 L4.5 4.2 Z" fill="none" stroke="#dedede" stroke-width="1" stroke-linejoin="round"/></svg>
<svg style="left:426px;top:689px" width="12" height="12" viewBox="0 0 12 12"><path d="M10 5.5 L5.5 10 Q3.5 12 1.5 10 Q0 8 2 6 L6.8 1.2 Q8 0 9.3 1.2 Q10.5 2.5 9.3 3.7 L4.8 8.2 Q4 9 3.3 8.3 Q2.7 7.5 3.5 6.8 L7.5 2.8" fill="none" stroke="#e0e0e0" stroke-width="1"/></svg>
<svg style="left:457px;top:689px" width="12" height="12" viewBox="0 0 12 12"><path d="M9.5 6.5 V10.5 Q9.5 11.5 8.5 11.5 H1.5 Q0.5 11.5 0.5 10.5 V3.5 Q0.5 2.5 1.5 2.5 H5.5 M4 8 L4.5 6 L10 0.5 L11.5 2 L6 7.5 Z" fill="none" stroke="#e0e0e0" stroke-width="1"/></svg>
<div class="t" style="left:493px;top:687px;width:240px;overflow:hidden;text-overflow:ellipsis;color:#222;font-weight:normal">《中国中西医结合外科杂志》简介</div>
<div class="t" style="left:753px;top:687px;color:#555;font-weight:normal">-</div>
<div class="t" style="left:913px;top:687px;color:#555;font-weight:normal">期刊论文</div>
<div class="a" style="left:292px;top:716px;width:720px;height:40px;background:#efefef"></div>
<div class="a" style="left:303px;top:730px;width:10px;height:10px;border-radius:50%;background:#e1e1e1"></div>
<svg style="left:333px;top:732px" width="11" height="10" viewBox="0 0 11 10"><path d="M5.5 9.3 L1.3 5.3 Q-0.3 3.3 1.3 1.5 Q3.3 -0.3 5.5 2.2 Q7.7 -0.3 9.7 1.5 Q11.3 3.3 9.7 5.3 Z" fill="none" stroke="#e0e0e0" stroke-width="1"/></svg>
<svg style="left:365px;top:730px" width="11" height="11" viewBox="0 0 11 11"><path d="M0.5 1.5 Q0.5 0.5 1.5 0.5 H5 L10.5 6 L6 10.5 L0.5 5 Z" fill="#d0d0d0"/><circle cx="3" cy="3" r="0.9" fill="#efefef"/></svg>
<svg style="left:395px;top:729px" width="12" height="12" viewBox="0 0 12 12"><path d="M6 0.8 L7.5 4.2 L11.2 4.5 L8.4 7 L9.3 10.8 L6 8.8 L2.7 10.8 L3.6 7 L0.8 4.5 L4.5 4.2 Z" fill="none" stroke="#dedede" stroke-width="1" stroke-linejoin="round"/></svg>
<svg style="left:426px;top:729px" width="12" height="12" viewBox="0 0 12 12"><path d="M10 5.5 L5.5 10 Q3.5 12 1.5 10 Q0 8 2 6 L6.8 1.2 Q8 0 9.3 1.2 Q10.5 2.5 9.3 3.7 L4.8 8.2 Q4 9 3.3 8.3 Q2.7 7.5 3.5 6.8 L7.5 2.8" fill="none" stroke="#e0e0e0" stroke-width="1"/></svg>
<svg style="left:457px;top:729px" width="12" height="12" viewBox="0 0 12 12"><path d="M9.5 6.5 V10.5 Q9.5 11.5 8.5 11.5 H1.5 Q0.5 11.5 0.5 10.5 V3.5 Q0.5 2.5 1.5 2.5 H5.5 M4 8 L4.5 6 L10 0.5 L11.5 2 L6 7.5 Z" fill="none" stroke="#e0e0e0" stroke-width="1"/></svg>
<div class="t" style="left:493px;top:727px;width:240px;overflow:hidden;text-overflow:ellipsis;color:#222;font-weight:normal">考虑碳减排收益的定制公交线路规划</div>
<div class="t" style="left:753px;top:727px;color:#555;font-weight:normal">李文翔; 刘蓓; 赵瑞; 唐...</div>
<div class="t" style="left:913px;top:727px;color:#555;font-weight:normal">期刊论文</div>
<div class="a" style="left:292px;top:756px;width:720px;height:40px;background:#f7f7f7"></div>
<div class="a" style="left:303px;top:770px;width:10px;height:10px;border-radius:50%;background:#e1e1e1"></div>
<svg style="left:333px;top:772px" width="11" height="10" viewBox="0 0 11 10"><path d="M5.5 9.3 L1.3 5.3 Q-0.3 3.3 1.3 1.5 Q3.3 -0.3 5.5 2.2 Q7.7 -0.3 9.7 1.5 Q11.3 3.3 9.7 5.3 Z" fill="none" stroke="#e0e0e0" stroke-width="1"/></svg>
<svg style="left:365px;top:770px" width="11" height="11" viewBox="0 0 11 11"><path d="M0.5 1.5 Q0.5 0.5 1.5 0.5 H5 L10.5 6 L6 10.5 L0.5 5 Z" fill="#d0d0d0"/><circle cx="3" cy="3" r="0.9" fill="#efefef"/></svg>
<svg style="left:395px;top:769px" width="12" height="12" viewBox="0 0 12 12"><path d="M6 0.8 L7.5 4.2 L11.2 4.5 L8.4 7 L9.3 10.8 L6 8.8 L2.7 10.8 L3.6 7 L0.8 4.5 L4.5 4.2 Z" fill="none" stroke="#dedede" stroke-width="1" stroke-linejoin="round"/></svg>
<svg style="left:426px;top:769px" width="12" height="12" viewBox="0 0 12 12"><path d="M10 5.5 L5.5 10 Q3.5 12 1.5 10 Q0 8 2 6 L6.8 1.2 Q8 0 9.3 1.2 Q10.5 2.5 9.3 3.7 L4.8 8.2 Q4 9 3.3 8.3 Q2.7 7.5 3.5 6.8 L7.5 2.8" fill="none" stroke="#e0e0e0" stroke-width="1"/></svg>
<svg style="left:457px;top:769px" width="12" height="12" viewBox="0 0 12 12"><path d="M9.5 6.5 V10.5 Q9.5 11.5 8.5 11.5 H1.5 Q0.5 11.5 0.5 10.5 V3.5 Q0.5 2.5 1.5 2.5 H5.5 M4 8 L4.5 6 L10 0.5 L11.5 2 L6 7.5 Z" fill="none" stroke="#e0e0e0" stroke-width="1"/></svg>
<div class="t" style="left:493px;top:767px;width:240px;overflow:hidden;text-overflow:ellipsis;color:#222;font-weight:normal">典型碳纤维增强热塑性复合材料/铝合金异...</div>
<div class="t" style="left:753px;top:767px;color:#555;font-weight:normal">张丽娇; 祝弘滨; 曲华; ...</div>
<div class="t" style="left:913px;top:767px;color:#555;font-weight:normal">期刊论文</div>
<div class="a" style="left:1013px;top:51px;width:373px;height:730px;background:#fff"></div>
<div class="a" style="left:1014px;top:51px;width:372px;height:70px;background:linear-gradient(#f2f2f2,#e2e3e5)"></div>
<div class="a" style="left:1201px;top:60px;width:176px;height:49px;border-radius:25px;background:#d9e5d9;border:1px solid #a9d9a3"></div>
<div class="a" style="left:1208px;top:65px;width:42px;height:42px;border-radius:50%;background:linear-gradient(#fbfdfb,#cfe6cc);border:1px solid #6cbf67"></div>
<div class="t" style="left:1223px;top:71px;font-size:21px;line-height:24px;color:#62a852">0</div>
<div class="t" style="left:1240px;top:86px;font-size:8px;line-height:10px;color:#7ab865">%</div>
<div class="t" style="left:1259px;top:71px;font-size:11px;line-height:14px;color:#66a04a">下载</div>
<div class="t" style="left:1259px;top:88px;font-size:11px;line-height:14px;color:#66a04a">0篇</div>
<div class="a" style="left:1292px;top:65px;width:42px;height:42px;border-radius:50%;background:linear-gradient(#fbfdfb,#cfe6cc);border:1px solid #6cbf67"></div>
<div class="t" style="left:1297px;top:71px;font-size:21px;line-height:24px;color:#62a852;letter-spacing:-2px">100</div>
<div class="t" style="left:1325px;top:86px;font-size:8px;line-height:10px;color:#7ab865">%</div>
<div class="t" style="left:1343px;top:71px;font-size:11px;line-height:14px;color:#66a04a">更新</div>
<div class="t" style="left:1343px;top:88px;font-size:11px;line-height:14px;color:#66a04a">1项</div>
<div class="a" style="left:1014px;top:121px;width:372px;height:40px;background:#8a93bb"></div>
<div class="t" style="left:1037px;top:132px;color:#fff;font-size:12px">综述</div>
<div class="t" style="left:1077px;top:132px;color:#fff;font-size:12px">细节</div>
<div class="t" style="left:1117px;top:132px;color:#fff;font-size:12px">辅助阅读</div>
<div class="t" style="left:1181px;top:132px;color:#fff;font-size:12px">笔记</div>
<div class="t" style="left:1221px;top:132px;color:#fff;font-size:12px">附件</div>
<div class="a" style="left:1069px;top:157px;width:40px;height:3px;background:#fff"></div>
<div class="t" style="left:1029px;top:180px;font-weight:bold;color:#111">文献类型</div>
<div class="a" style="left:1106px;top:175px;width:130px;height:28px;border-radius:4px;border:1px solid #b4b4b4;background:#fff"></div>
<div class="t" style="left:1122px;top:180px;color:#555">期刊论文</div>
<svg style="left:1212px;top:187px" width="12" height="7" viewBox="0 0 12 7"><path d="M0.5 0.5 L6 6 L11.5 0.5" fill="none" stroke="#c8c8c8" stroke-width="1"/></svg>
<svg style="left:1330px;top:183px" width="15" height="15" viewBox="0 0 15 15"><path d="M12.8 8.5 A5.7 5.7 0 1 1 10.5 3" fill="none" stroke="#9a9a9a" stroke-width="1.8"/><path d="M8.5 0.8 L13.8 1 L13 6 Z" fill="#9a9a9a"/></svg>
<svg style="left:1356px;top:183px" width="15" height="15" viewBox="0 0 15 15"><path d="M6 1.5 H1.5 V13.5 H13.5 V9" fill="none" stroke="#9a9a9a" stroke-width="1.8"/><path d="M7 8 L13 2M9 1.2 H13.8 V6" fill="none" stroke="#9a9a9a" stroke-width="1.8"/></svg>
<div class="t" style="left:1029px;top:217px;font-weight:bold;color:#111">主要字段</div>
<div class="a" style="left:1014px;top:243px;width:372px;height:61px;background:#fff"></div>
<div class="t" style="left:1029px;top:266px;color:#555">标题</div>
<div class="t" style="left:1113px;top:254px;color:#555">国际新蛋白产业发展的缘起、现状及挑战:一个文</div>
<div class="t" style="left:1113px;top:277px;color:#555">献综述</div>
<div class="a" style="left:1014px;top:304px;width:372px;height:92px;background:#f0f1f7"></div>
<div class="t" style="left:1029px;top:341px;color:#555">标题译名</div>
<div class="t" style="left:1113px;top:314px;color:#555">The Origins,Current Status,and Challenges of In</div>
<div class="t" style="left:1113px;top:340px;color:#555">ternational Novel Protein Industry Development:</div>
<div class="t" style="left:1113px;top:366px;color:#555">A Literature Review</div>
<div class="a" style="left:1014px;top:396px;width:372px;height:38px;background:#fff"></div>
<div class="t" style="left:1029px;top:405px;color:#555">作者</div>
<div class="t" style="left:1113px;top:405px;color:#555">龙文进;;袁之名</div>
<div class="a" style="left:1014px;top:434px;width:372px;height:39px;background:#f0f1f7"></div>
<div class="t" style="left:1029px;top:444px;color:#555">期刊名称</div>
<div class="t" style="left:1113px;top:444px;color:#555">世界农业</div>
<div class="a" style="left:1014px;top:473px;width:372px;height:39px;background:#fff"></div>
<div class="t" style="left:1029px;top:482px;color:#555">年份</div>
<div class="t" style="left:1113px;top:482px;color:#555">2025</div>
<div class="a" style="left:1014px;top:512px;width:372px;height:39px;background:#f0f1f7"></div>
<div class="t" style="left:1029px;top:522px;color:#555">卷</div>
<div class="a" style="left:1014px;top:551px;width:372px;height:39px;background:#fff"></div>
<div class="t" style="left:1029px;top:560px;color:#555">期</div>
<div class="t" style="left:1113px;top:560px;color:#555">10</div>
<div class="a" style="left:1014px;top:590px;width:372px;height:40px;background:#f0f1f7"></div>
<div class="t" style="left:1029px;top:600px;color:#555">页码</div>
<div class="t" style="left:1113px;top:600px;color:#555">41-53</div>
<div class="t" style="left:1113px;top:637px;color:#555">随着全球人口增长、环境压力加剧和消费观念转</div>
<div class="t" style="left:1113px;top:660px;color:#555">变,传统动物蛋白生产面临着资源约束、环境污染</div>
<div class="t" style="left:1113px;top:683px;color:#555">和食品安全等多重挑战.新蛋白产业作为一种创新</div>
<div class="t" style="left:1113px;top:706px;color:#555">性解决方案应运而生,涵盖植物蛋白、细胞培养</div>
<div class="t" style="left:1113px;top:729px;color:#555">肉、发酵蛋白、昆虫蛋白等多种技术路径.本文通</div>
<div class="t" style="left:1113px;top:752px;color:#555">过梳理国际新蛋白产业发展的相关文献,系统分析</div>
<div class="a" style="left:1004px;top:396px;width:21px;height:40px;border-radius:3px;background:#e7e9f3;border:1px solid #d0d5e8"></div>
<svg style="left:1011px;top:410px" width="6" height="11" viewBox="0 0 6 11"><path d="M0.5 0.5 L5.5 5.5 L0.5 10.5" fill="none" stroke="#8c92c4" stroke-width="1"/></svg>
<div class="a" style="left:663px;top:214px;width:164px;height:470px;border-radius:10px;background:#fff;box-shadow:0 5px 16px rgba(0,0,0,0.28)"></div>
<div class="a" style="left:663px;top:318px;width:164px;height:24px;background:#e8e8e8"></div>
<div class="t" style="left:687px;top:226px;color:#1a1a1a">新建</div>
<svg style="left:810px;top:230px" width="5" height="8" viewBox="0 0 5 8"><path d="M0 0 L5 4 L0 8 Z" fill="#555"/></svg>
<div class="t" style="left:687px;top:250px;color:#1a1a1a">编辑</div>
<div class="t" style="left:687px;top:274px;color:#1a1a1a">添加附件</div>
<div class="t" style="left:687px;top:298px;color:#1a1a1a">复制</div>
<svg style="left:810px;top:302px" width="5" height="8" viewBox="0 0 5 8"><path d="M0 0 L5 4 L0 8 Z" fill="#555"/></svg>
<div class="t" style="left:687px;top:322px;color:#1a1a1a">更新文献元数据</div>
<svg style="left:810px;top:326px" width="5" height="8" viewBox="0 0 5 8"><path d="M0 0 L5 4 L0 8 Z" fill="#555"/></svg>
<div class="t" style="left:687px;top:346px;color:#1a1a1a">自动下载全文</div>
<div class="t" style="left:687px;top:370px;color:#1a1a1a">导出笔记</div>
<div class="t" style="left:687px;top:394px;color:#1a1a1a">多文献阅读</div>
<div class="t" style="left:687px;top:429px;color:#1a1a1a">翻译字段</div>
<svg style="left:810px;top:433px" width="5" height="8" viewBox="0 0 5 8"><path d="M0 0 L5 4 L0 8 Z" fill="#555"/></svg>
<div class="t" style="left:687px;top:453px;color:#1a1a1a">选择文献</div>
<svg style="left:810px;top:457px" width="5" height="8" viewBox="0 0 5 8"><path d="M0 0 L5 4 L0 8 Z" fill="#555"/></svg>
<div class="t" style="left:687px;top:477px;color:#1a1a1a">阅读状态</div>
<svg style="left:810px;top:481px" width="5" height="8" viewBox="0 0 5 8"><path d="M0 0 L5 4 L0 8 Z" fill="#555"/></svg>
<div class="t" style="left:687px;top:501px;color:#1a1a1a">已收藏</div>
<svg style="left:810px;top:505px" width="5" height="8" viewBox="0 0 5 8"><path d="M0 0 L5 4 L0 8 Z" fill="#555"/></svg>
<div class="t" style="left:687px;top:525px;color:#1a1a1a">颜色标签</div>
<svg style="left:810px;top:529px" width="5" height="8" viewBox="0 0 5 8"><path d="M0 0 L5 4 L0 8 Z" fill="#555"/></svg>
<div class="t" style="left:687px;top:549px;color:#1a1a1a">评分</div>
<svg style="left:810px;top:553px" width="5" height="8" viewBox="0 0 5 8"><path d="M0 0 L5 4 L0 8 Z" fill="#555"/></svg>
<div class="t" style="left:687px;top:584px;color:#1a1a1a">链接到文件夹</div>
<div class="t" style="left:687px;top:608px;color:#1a1a1a">移动到文件夹</div>
<div class="t" style="left:687px;top:632px;color:#1a1a1a">从当前文件夹下移除</div>
<div class="t" style="left:687px;top:656px;color:#1a1a1a">删除至回收站</div>
<div class="a" style="left:664px;top:419px;width:162px;height:1px;background:#dadbe2"></div>
<div class="a" style="left:664px;top:574px;width:162px;height:1px;background:#dadbe2"></div>
<div class="a" style="left:819px;top:322px;width:104px;height:64px;border-radius:9px;background:#fff;box-shadow:0 5px 16px rgba(0,0,0,0.28)"></div>
<div class="a" style="left:819px;top:330px;width:104px;height:24px;background:#e8e8e8"></div>
<div class="t" style="left:843px;top:334px;color:#1a1a1a">自动更新</div>
<div class="t" style="left:843px;top:358px;color:#1a1a1a">手动更新</div>
<div class="a" style="left:624px;top:198px;width:36px;height:37px;background:#8080ff"></div>
<svg style="left:624px;top:198px" width="36" height="37" viewBox="0 0 36 37" fill="none" stroke="#fff" stroke-width="1.8"><circle cx="18" cy="19" r="10.1"/><path d="M14.2 14.2 L18.2 12.3 V24.4 M14.3 24.4 H22"/></svg>
<div class="a" style="left:642px;top:310px;width:36px;height:37px;background:#8080ff"></div>
<svg style="left:642px;top:310px" width="36" height="37" viewBox="0 0 36 37" fill="none" stroke="#fff" stroke-width="1.8"><circle cx="18" cy="19" r="10.1"/><path d="M14.2 14.8 Q14.8 12.1 18 12.1 Q21.5 12.1 21.5 15.3 Q21.5 17.5 18.5 20.3 L14 24.4 H22.2"/></svg>
<div class="a" style="left:903px;top:322px;width:36px;height:37px;background:#8080ff"></div>
<svg style="left:903px;top:322px" width="36" height="37" viewBox="0 0 36 37" fill="none" stroke="#fff" stroke-width="1.8"><circle cx="18" cy="19" r="10.1"/><path d="M14.3 13.2 Q15.8 12.1 18 12.1 Q21.3 12.1 21.3 15 Q21.3 18.1 16.2 18.1 Q21.8 18.2 21.8 21.3 Q21.8 24.9 17.6 24.9 Q15.5 24.9 14.2 24"/></svg>
<div class="a" style="left:885px;top:74px;width:36px;height:37px;background:#8080ff"></div>
<svg style="left:885px;top:74px" width="36" height="37" viewBox="0 0 36 37" fill="none" stroke="#fff" stroke-width="1.8"><circle cx="18" cy="19" r="10.1"/><path d="M19.6 25.2 V12.3 L13.2 21.3 H22.6"/></svg>
</div><div id="frame"></div></body></html>
